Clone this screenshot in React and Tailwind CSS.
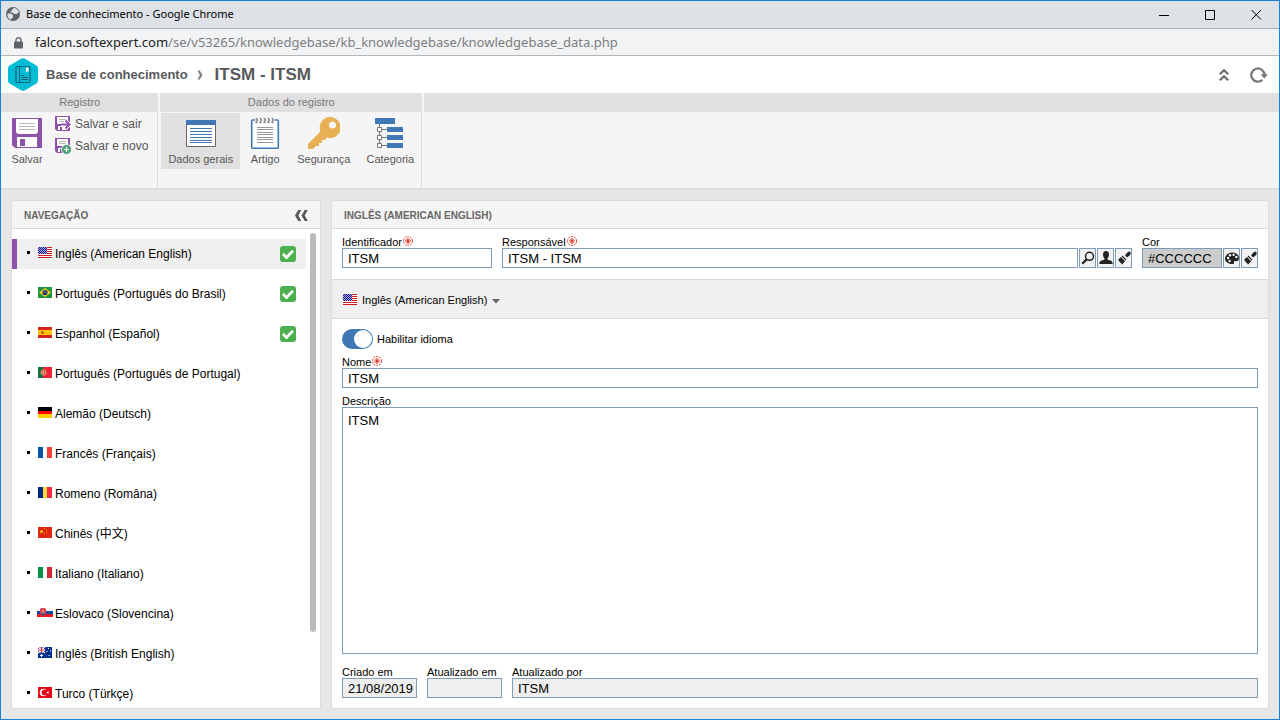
import React, { useState } from 'react';

const languages = [
    { code: 'us', name: 'Inglês (American English)', enabled: true },
    { code: 'br', name: 'Português (Português do Brasil)', enabled: true },
    { code: 'es', name: 'Espanhol (Español)', enabled: true },
    { code: 'pt', name: 'Português (Português de Portugal)' },
    { code: 'de', name: 'Alemão (Deutsch)' },
    { code: 'fr', name: 'Francês (Français)' },
    { code: 'ro', name: 'Romeno (Româna)' },
    { code: 'cn', name: 'Chinês (中文)' },
    { code: 'it', name: 'Italiano (Italiano)' },
    { code: 'sk', name: 'Eslovaco (Slovencina)' },
    { code: 'au', name: 'Inglês (British English)' },
    { code: 'tr', name: 'Turco (Türkçe)' },
];

const flags = {
    us: (
        <>
            <rect width="14" height="11" fill="#fff" />
            <path d="M0 .5h14M0 2.5h14M0 4.5h14M0 6.5h14M0 8.5h14M0 10.5h14" stroke="#d01c1c" />
            <rect width="9" height="7" fill="#1a1a8c" />
            <path d="M0 .5h9M0 2.5h9M0 4.5h9M0 6.5h9" stroke="#a3a3da" strokeDasharray="1 1" />
            <path d="M1 1.5h8M1 3.5h8M1 5.5h8" stroke="#a3a3da" strokeDasharray="1 1" />
        </>
    ),
    br: (
        <>
            <rect width="14" height="11" fill="#1f9440" />
            <path d="M7 1l6 4.5L7 10 1 5.5z" fill="#f7d417" />
            <circle cx="7" cy="5.5" r="2.6" fill="#22306e" />
            <path d="M4.800 4.800q2.500-.4 4.400 1.400" stroke="#9fb3c8" strokeWidth=".6" fill="none" />
        </>
    ),
    es: (
        <>
            <rect width="14" height="11" fill="#d5221f" />
            <rect y="3" width="14" height="5" fill="#ffc400" />
            <circle cx="4.500" cy="5.500" r="1.600" fill="#b5652a" />
        </>
    ),
    pt: (
        <>
            <rect width="14" height="11" fill="#f02436" />
            <rect width="5" height="11" fill="#107040" />
            <circle cx="5.500" cy="5.500" r="3" fill="#c9a06a" />
            <circle cx="5.500" cy="5.500" r="2" fill="#e0433c" />
            <circle cx="5.500" cy="5.500" r="1" fill="#e8d8d8" />
        </>
    ),
    de: (
        <>
            <rect width="14" height="4" fill="#000" />
            <rect y="4" width="14" height="4" fill="#f00" />
            <rect y="7" width="14" height="4" fill="#fc0" />
        </>
    ),
    fr: (
        <>
            <rect width="14" height="11" fill="#fff" />
            <rect width="5" height="11" fill="#0055a4" />
            <rect x="9" width="5" height="11" fill="#ef4135" />
        </>
    ),
    ro: (
        <>
            <rect width="14" height="11" fill="#ffd83d" />
            <rect width="5" height="11" fill="#00267f" />
            <rect x="9" width="5" height="11" fill="#f42a41" />
        </>
    ),
    cn: (
        <>
            <rect width="14" height="11" fill="#de2910" />
            <path d="M3.500 2.500l.6 1.300 1.400.1-1.100 1 .4 1.500-1.300-.8-1.300.8.4-1.500-1.100-1 1.400-.1z" fill="#ffde00" />
            <path d="M6 1.500h1M8 3h1M8 5h1M6 7h1" stroke="#f0a010" />
        </>
    ),
    it: (
        <>
            <rect width="14" height="11" fill="#fff" />
            <rect width="5" height="11" fill="#009246" />
            <rect x="9" width="5" height="11" fill="#ce2b37" />
        </>
    ),
    sk: (
        <>
            <rect x="-1" y="1" width="16" height="3" fill="#f8f8f8" />
            <rect x="-1" y="4" width="16" height="3" fill="#0b4ea2" />
            <rect x="-1" y="7" width="16" height="3" fill="#f0161d" />
            <path d="M2 2q0-1 3-1t3 1v3.500q0 2.500-3 4-3-1.500-3-4z" fill="#d8404c" />
            <path d="M5 2.500v4M3.700 4h2.600" stroke="#f4c8cc" strokeWidth=".6" />
            <path d="M3 7q2-1 4 0-.8 1.300-2 1.800Q3.800 8.300 3 7z" fill="#0b4ea2" />
        </>
    ),
    au: (
        <>
            <rect width="14" height="11" fill="#00308f" />
            <path d="M0 0l7 6M7 0L0 6" stroke="#fff" strokeWidth="1.200" />
            <path d="M3.500 0v6M0 3h7" stroke="#fff" strokeWidth="2" />
            <path d="M3.500 0v6M0 3h7" stroke="#e0323c" />
            <path d="M3.500 7v3M2 8.500h3M10.500 1v1M8.500 4.500h1M12 4h1M10.500 8.500h1" stroke="#fff" />
        </>
    ),
    tr: (
        <>
            <rect width="14" height="11" fill="#e30a17" />
            <circle cx="5.500" cy="5.500" r="3.800" fill="#fff" />
            <circle cx="6.700" cy="5.500" r="3" fill="#e30a17" />
            <path d="M8 5.500l3-1.300-.6 1.300.6 1.300z" fill="#fff" />
        </>
    ),
};

const Flag = ({ code }) => (
    <svg width="14" height="11" viewBox="0 0 14 11" className="shrink-0 overflow-visible">{flags[code]}</svg>
);

const RequiredMark = () => (
    <svg width="10" height="10" viewBox="0 0 10 10" className="mb-[2px] shrink-0">
        <circle cx="5" cy="5" r="4.500" fill="none" stroke="#e0301e" strokeWidth=".9" strokeDasharray="2 .83" />
        <path d="M5 2v6M2 5h6" stroke="#e0301e" strokeWidth="1.200" />
        <path d="M3.200 3.200l3.600 3.600M6.800 3.200L3.200 6.800" stroke="#e0301e" strokeWidth=".8" />
    </svg>
);

const CheckBadge = () => (
    <svg width="16" height="16" viewBox="0 0 16 16" className="shrink-0">
        <rect width="16" height="16" rx="3" fill="#4caf50" />
        <path d="M3 8l3.500 3.600L13 4.700" fill="none" stroke="#fff" strokeWidth="2.800" />
    </svg>
);

const SaveIcon = () => (
    <svg width="32" height="32" viewBox="0 0 32 32">
        <path d="M1 1h30v30H4l-3-3z" fill="#8e52ab" />
        <path d="M5 2h22v12q0 3-3 3H8q-3 0-3-3z" fill="#fff" />
        <path d="M8 6.500h16M8 9.500h16M8 12.500h16" stroke="#b9b9b9" />
        <path d="M6 20h20v10H6z" fill="#fff" />
        <path d="M9 22h5v7H9z" fill="#8e52ab" />
    </svg>
);

const SmallSaveIcon = ({ children }) => (
    <svg width="16" height="16" viewBox="0 0 16 16" className="shrink-0 overflow-visible">
        <path d="M0 0h15v15H2l-2-2z" fill="#8e52ab" />
        <path d="M2 1h11v6q0 1-1 1H3Q2 8 2 7z" fill="#fff" />
        <path d="M4 3.500h7M4 5.500h7" stroke="#b9b9b9" />
        <path d="M3 10h9v4H3z" fill="#fff" />
        <path d="M5 11h2v3H5z" fill="#8e52ab" />
        {children}
    </svg>
);

const DataIcon = () => (
    <svg width="32" height="32" viewBox="0 0 32 32">
        <path d="M1.500 3.500h29v26h-29z" fill="#fff" stroke="#666" />
        <path d="M1 3h30v5H1z" fill="#3f78b5" />
        <path d="M5 11.500h22M5 14.500h22M5 17.500h22M5 20.500h22M5 23.500h22M5 25.500h22" stroke="#3f78b5" />
    </svg>
);

const ArticleIcon = () => (
    <svg width="32" height="32" viewBox="0 0 32 32">
        <rect x="2.700" y="3" width="26.600" height="28.300" rx="1" fill="#fff" stroke="#3f78b5" strokeWidth="1.600" />
        <path d="M6 2h20v2H6z" fill="#f5f5f5" />
        <path d="M7 1l1.500 2L7 5l1.500 1M11 1l1.500 2L11 5l1.500 1M15 1l1.500 2L15 5l1.500 1M19 1l1.500 2L19 5l1.500 1M23 1l1.500 2L23 5l1.500 1" fill="none" stroke="#8a8a8a" strokeWidth="1.500" />
        <path d="M8 10.500h16M8 12.500h16M8 15.500h16M8 17.500h16M8 20.500h16M8 22.500h16M8 25.500h16" stroke="#999" />
    </svg>
);

const KeyIcon = () => (
    <svg width="32" height="32" viewBox="0 0 32 32">
        <path fillRule="evenodd" d="M22 0a10.500 10.500 0 1 1-3 20.500l-2 2.500h-3v3h-3v3H8l-3 3H0v-5l12.500-12.500A10.500 10.500 0 0 1 22 0zm2.500 4.500a3.500 3.500 0 1 0 0 7 3.500 3.500 0 0 0 0-7z" fill="#e8b054" />
    </svg>
);

const CategoryIcon = () => (
    <svg width="32" height="32" viewBox="0 0 32 32">
        <path d="M1 1h20v6H1zM13 10h16v5H13zM13 18h16v5H13zM13 26h16v5H13z" fill="#3f78b5" />
        <path d="M5.500 7v21M5 12.500h8M5 20.500h8M5 28.500h8" stroke="#777" fill="none" />
        <path d="M3.500 10.500h4v4h-4zM3.500 18.500h4v4h-4zM3.500 26.500h4v4h-4z" stroke="#777" fill="#fff" />
    </svg>
);

const SearchIcon = () => (
    <svg width="14" height="14" viewBox="0 0 14 14" fill="none" stroke="#222">
        <circle cx="8.500" cy="5.300" r="4" strokeWidth="1.500" />
        <path d="M5.600 8.400L1.200 12.800" strokeWidth="2.200" />
    </svg>
);

const UserIcon = () => (
    <svg width="14" height="14" viewBox="0 0 14 14" fill="#222">
        <path d="M7 0c2 0 3 1.500 3 3.500S9 7 8.500 7.500v1l4 1.500q1.200.5 1.200 3H.3q0-2.500 1.200-3l4-1.500v-1C5 7 4 5.500 4 3.500S5 0 7 0z" />
    </svg>
);

const BrushIcon = () => (
    <svg width="14" height="14" viewBox="0 0 14 14" fill="#222">
        <path d="M12.500.5l1.300 1.300-.6 2.200-3.200 2.500-2-2.200L11 1z" />
        <path d="M5.500 4.500l4 4.200-.9.900-4-4.200z" />
        <path d="M4 6l4 4.200-2.800 3.300-1-.5.200-1.300-1.400.4.3-1.500-1.600.4.5-1.500L.8 9z" />
    </svg>
);

const PaletteIcon = () => (
    <svg width="14" height="14" viewBox="0 0 14 14">
        <path d="M7.500 1.500C11 1.500 14 4 14 7c0 2.500-1.500 3.500-3 3-1.500-.4-2.400.2-2 1.500.3 1-.5 1.500-2 1.500C3 13 0 10.500 0 7.500s3.500-6 7.500-6z" fill="#222" />
        <g fill="#fff">
            <circle cx="3" cy="7" r="1.200" />
            <circle cx="5" cy="4.200" r="1.200" />
            <circle cx="8.600" cy="3.700" r="1.200" />
            <circle cx="11.400" cy="6" r="1.200" />
            <circle cx="4.600" cy="10" r="1.200" />
        </g>
    </svg>
);

const RibbonButton = ({ icon, label, active }) => (
    <button className={`flex h-14 flex-col items-center gap-[3px] px-[7px] pt-1 text-[11px] leading-[14px] text-[#555] ${active ? 'bg-[#e0e0e0]' : ''}`}>
        {icon}
        {label}
    </button>
);

const RibbonGroup = ({ title, children }) => (
    <section className="flex flex-col">
        <h2 className="h-[19px] bg-[#e0e0e0] text-center text-[11px] leading-[19px] text-[#777]">{title}</h2>
        <div className="flex flex-1 border-r border-[#ddd] pt-px">{children}</div>
    </section>
);

const ToolButton = ({ label, children }) => (
    <button aria-label={label} className="flex h-5 w-[17px] shrink-0 items-center justify-center border border-[#7f9db9] bg-[#f2f2f2]">
        {children}
    </button>
);

const Field = ({ id, label, required, className, children }) => (
    <div className={`flex flex-col ${className || ''}`}>
        <label htmlFor={id} className="flex items-center gap-px text-[11px] leading-3">
            {label}
            {required && <RequiredMark />}
        </label>
        {children}
    </div>
);

const inputClass = 'h-5 w-full min-w-0 border border-[#7f9db9] pl-[5px] text-[13px] leading-[18px] outline-none';

const App = () => {
    const [selected, setSelected] = useState('us');
    const [enabled, setEnabled] = useState(true);
    const [formData, setFormData] = useState({
        identifier: 'ITSM',
        owner: 'ITSM - ITSM',
        color: '#CCCCCC',
        name: 'ITSM',
        description: 'ITSM',
    });

    const handleChange = (e) => setFormData({ ...formData, [e.target.name]: e.target.value });

    return (
        <div className="flex h-screen flex-col overflow-hidden border border-[#1883d7] bg-[#e7e7e7] font-['Liberation_Sans','Noto_Sans_CJK_SC',sans-serif] text-black">
            {/* Window title */}
            <div className="flex h-7 shrink-0 items-center border-b border-[#a9acb0] bg-[#dee1e6] pl-1">
                <svg width="16" height="16" viewBox="0 0 16 16">
                    <circle cx="8" cy="7" r="7" fill="#5f6368" />
                    <path d="M2.500 6.500h3.500l2 1.500v2.500l-2 1.500v1q-4-2-3.500-6.500zM7 2.500l2-1.500q3.500.3 4.800 4L12 7H9L7.500 5.500H5.500V4H7z" fill="#dee1e6" />
                </svg>
                <span className="ml-[5px] font-['Noto_Sans','Open_Sans',sans-serif] text-[11px]">Base de conhecimento - Google Chrome</span>
                <div className="ml-auto flex">
                    <button aria-label="Minimizar" className="flex w-[46px] justify-center">
                        <svg width="11" height="11" viewBox="0 0 11 11"><path d="M0 6.500h10" stroke="#000" /></svg>
                    </button>
                    <button aria-label="Maximizar" className="flex w-[46px] justify-center">
                        <svg width="11" height="11" viewBox="0 0 11 11"><path d="M.5 1.500h9v9h-9z" fill="none" stroke="#000" /></svg>
                    </button>
                    <button aria-label="Fechar" className="flex w-[46px] justify-center">
                        <svg width="11" height="11" viewBox="0 0 11 11"><path d="M.5 1l9.500 9.500M10 1L.5 10.500" stroke="#000" /></svg>
                    </button>
                </div>
            </div>

            {/* Address */}
            <div className="flex h-[27px] shrink-0 items-center border-b border-[#b4b6b9] bg-[#f1f3f4] pl-[13px] pt-px">
                <svg width="9" height="12" viewBox="0 0 9 12">
                    <path d="M2 5V3.200a2.500 2.500 0 0 1 5 0V5" fill="none" stroke="#5f6368" strokeWidth="1.300" />
                    <rect y="4.500" width="9" height="7" rx="1" fill="#5f6368" />
                </svg>
                <span className="ml-3 font-['Noto_Sans','Open_Sans',sans-serif] text-[13px] text-[#7b7e82]">
                    <span className="text-[#202124]">falcon.softexpert.com</span>/se/v53265/knowledgebase/kb_knowledgebase/knowledgebase_data.php
                </span>
            </div>

            {/* Breadcrumb */}
            <header className="flex h-[37px] shrink-0 items-center bg-white pl-[7px] pr-[11px] font-bold text-[#58595b]">
                <svg width="30" height="33" viewBox="0 0 30 33">
                    <path d="M13 .8q2-1.100 4 0l11 6.400q2 1.100 2 3.300v12q0 2.200-2 3.300l-11 6.400q-2 1.100-4 0L2 25.800q-2-1.100-2-3.300v-12Q0 8.300 2 7.200z" fill="#00bcd4" />
                    <rect x="8" y="8.500" width="14" height="16" rx="1" fill="none" stroke="#17647a" strokeWidth="1.200" />
                    <path d="M11.500 8.500v16" stroke="#17647a" />
                    <path d="M18 9.500h2.500v5L19.200 13 18 14.500z" fill="#fff" />
                    <path d="M13.500 17.500h3M13.500 19.500h6.500M13.500 21.500h6.500" stroke="#17647a" />
                </svg>
                <a href="#base" className="ml-2 text-[13px]">Base de conhecimento</a>
                <svg width="6" height="10" viewBox="0 0 6 10" className="ml-[9px]"><path d="M.5 .5h2.200L5.500 5 2.700 9.500H.5L2.800 5z" fill="#808080" /></svg>
                <h1 className="ml-3 text-[17px]">ITSM - ITSM</h1>
                <button aria-label="Recolher" className="ml-auto">
                    <svg width="10" height="14" viewBox="0 0 10 14" fill="none" stroke="#6b6b6b" strokeWidth="2.200"><path d="M.8 6.200L5 2.200l4.200 4M.8 12.200L5 8.200l4.200 4" /></svg>
                </button>
                <button aria-label="Atualizar" className="ml-[21px]">
                    <svg width="18" height="16" viewBox="0 0 18 16"><path d="M12.500 12.800A6.600 6.600 0 1 1 14.500 8" fill="none" stroke="#777" strokeWidth="2.200" /><path d="M10.500 7.200H18L14.300 11.500z" fill="#777" /></svg>
                </button>
            </header>

            {/* Ribbon */}
            <div className="flex h-[97px] shrink-0 gap-[2px] border-b-2 border-[#ddd] bg-[#f5f5f5]">
                <RibbonGroup title="Registro">
                    <div className="flex pl-[3px] pr-[9px]">
                        <RibbonButton icon={<SaveIcon />} label="Salvar" />
                        <div className="ml-[5px] flex flex-col gap-[6px] pt-[3px] text-[12px] leading-4 text-[#555]">
                            <button className="flex gap-1">
                                <SmallSaveIcon>
                                    <path d="M6 8.500h6" stroke="#fff" strokeWidth="4" />
                                    <path d="M10 4.500l4 4-4 4" fill="none" stroke="#fff" strokeWidth="4.500" />
                                    <path d="M6 8.500h8" stroke="#8e52ab" strokeWidth="2" />
                                    <path d="M10.500 4.500l4 4-4 4" fill="none" stroke="#8e52ab" strokeWidth="2" />
                                </SmallSaveIcon>
                                Salvar e sair
                            </button>
                            <button className="flex gap-1">
                                <SmallSaveIcon>
                                    <circle cx="11.500" cy="11.500" r="5" fill="#4a9f79" stroke="#f5f5f5" />
                                    <path d="M11.500 9v5M9 11.500h5" stroke="#fff" strokeWidth="1.200" />
                                </SmallSaveIcon>
                                Salvar e novo
                            </button>
                        </div>
                    </div>
                </RibbonGroup>
                <RibbonGroup title="Dados do registro">
                    <div className="flex gap-[2px] pl-px">
                        <RibbonButton icon={<DataIcon />} label="Dados gerais" active />
                        <RibbonButton icon={<ArticleIcon />} label="Artigo" />
                        <RibbonButton icon={<KeyIcon />} label="Segurança" />
                        <RibbonButton icon={<CategoryIcon />} label="Categoria" />
                    </div>
                </RibbonGroup>
                <div className="h-[19px] flex-1 bg-[#e0e0e0]" />
            </div>

            <main className="flex min-h-0 flex-1 gap-[10px] p-[10px]">
                {/* Languages */}
                <nav className="flex w-[310px] shrink-0 flex-col overflow-hidden rounded-[3px] border border-[#dadada] bg-white">
                    <div className="flex h-7 shrink-0 items-center justify-between border-b border-[#dadada] bg-[#f4f4f4] px-3 pt-px">
                        <h2 className="text-[10px] font-bold text-[#666]">NAVEGAÇÃO</h2>
                        <button aria-label="Recolher navegação">
                            <svg width="13" height="11" viewBox="0 0 13 11" fill="#555"><path d="M3.300 0h3L3.200 5.500 6.300 11h-3L0 5.500zM9.800 0h3L9.700 5.500l3.100 5.500h-3L6.500 5.500z" /></svg>
                        </button>
                    </div>
                    <div className="flex min-h-0 flex-1 pr-1">
                        <ul className="flex flex-1 flex-col gap-[10px] overflow-hidden pt-[10px]">
                            {languages.map((lang) => (
                                <li key={lang.code} className="shrink-0">
                                    <button
                                        onClick={() => setSelected(lang.code)}
                                        className={`flex h-[30px] w-full items-center border-l-[5px] px-[10px] text-[12px] ${selected === lang.code ? 'border-[#8e52ab] bg-[#efefef]' : 'border-transparent'}`}
                                    >
                                        <span className="mb-[3px] size-[3px] bg-black" />
                                        <span className="mb-[3px] ml-2 flex"><Flag code={lang.code} /></span>
                                        <span className="ml-[3px] flex-1 text-left">{lang.name}</span>
                                        {lang.enabled && <CheckBadge />}
                                    </button>
                                </li>
                            ))}
                        </ul>
                        <div className="ml-1 mt-1 h-5/6 w-[6px] rounded-full bg-[#bababa]" />
                    </div>
                </nav>

                {/* Record */}
                <section className="flex min-w-0 flex-1 flex-col rounded-[3px] border border-[#dadada] bg-white">
                    <h2 className="flex h-7 shrink-0 items-center rounded-t-[3px] border-b border-[#dadada] bg-[#f4f4f4] px-3 pt-px text-[10px] font-bold text-[#666]">INGLÊS (AMERICAN ENGLISH)</h2>
                    <div className="flex gap-[10px] border-b border-[#dadada] px-[10px] pb-[11px] pt-[7px]">
                        <Field id="identifier" label="Identificador" required className="w-[150px]">
                            <input id="identifier" name="identifier" className={inputClass} value={formData.identifier} onChange={handleChange} />
                        </Field>
                        <Field id="owner" label="Responsável" required className="flex-1">
                            <div className="flex gap-px">
                                <input id="owner" name="owner" className={inputClass} value={formData.owner} onChange={handleChange} />
                                <ToolButton label="Pesquisar"><SearchIcon /></ToolButton>
                                <ToolButton label="Usuário"><UserIcon /></ToolButton>
                                <ToolButton label="Limpar responsável"><BrushIcon /></ToolButton>
                            </div>
                        </Field>
                        <Field id="color" label="Cor" className="w-[116px]">
                            <div className="flex gap-px">
                                <input id="color" name="color" className={`${inputClass} bg-[#cccccc]`} value={formData.color} onChange={handleChange} />
                                <ToolButton label="Escolher cor"><PaletteIcon /></ToolButton>
                                <ToolButton label="Limpar cor"><BrushIcon /></ToolButton>
                            </div>
                        </Field>
                    </div>

                    <div className="flex h-[39px] shrink-0 items-center border-b border-[#dadada] bg-[#efefef] px-[11px]">
                        <button className="flex items-center text-[11px]">
                            <Flag code="us" />
                            <span className="ml-[5px] mt-[3px]">Inglês (American English)</span>
                            <svg width="8" height="5" viewBox="0 0 8 5" className="ml-[5px] mt-1"><path d="M0 0h8L4 4.500z" fill="#666" /></svg>
                        </button>
                    </div>

                    <div className="flex min-h-0 flex-1 flex-col p-[10px]">
                        <label className="flex items-center gap-1 text-[11px]">
                            <input
                                type="checkbox"
                                checked={enabled}
                                onChange={(e) => setEnabled(e.target.checked)}
                                className="flex h-5 w-[31px] appearance-none rounded-full bg-[#aaa] p-px before:size-[18px] before:rounded-full before:bg-white checked:justify-end checked:bg-[#3f78b5]"
                            />
                            Habilitar idioma
                        </label>
                        <Field id="name" label="Nome" required className="mt-[7px]">
                            <input id="name" name="name" className={inputClass} value={formData.name} onChange={handleChange} />
                        </Field>
                        <Field id="description" label="Descrição" className="mt-[7px] min-h-0 flex-1">
                            <textarea
                                id="description"
                                name="description"
                                className="min-h-0 w-full flex-1 resize-none border border-[#7f9db9] px-[5px] py-1 text-[13px] leading-[18px] outline-none"
                                value={formData.description}
                                onChange={handleChange}
                            />
                        </Field>
                        <div className="mt-3 flex gap-[10px]">
                            <Field id="createdAt" label="Criado em" className="w-[75px]">
                                <input id="createdAt" readOnly className={`${inputClass} bg-[#efefef]`} value="21/08/2019" />
                            </Field>
                            <Field id="updatedAt" label="Atualizado em" className="w-[75px]">
                                <input id="updatedAt" readOnly className={`${inputClass} bg-[#efefef]`} value="" />
                            </Field>
                            <Field id="updatedBy" label="Atualizado por" className="flex-1">
                                <input id="updatedBy" readOnly className={`${inputClass} bg-[#efefef]`} value="ITSM" />
                            </Field>
                        </div>
                    </div>
                </section>
            </main>
        </div>
    );
};

export default App;
